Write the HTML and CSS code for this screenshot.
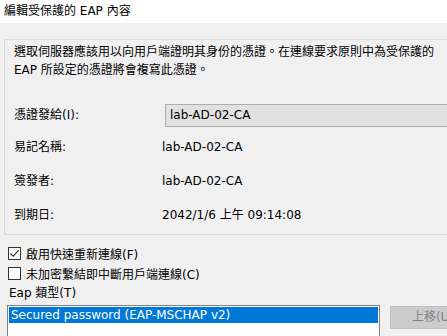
FILE: index.html
```html
<!DOCTYPE html>
<html lang="zh-Hant">
<head>
<meta charset="utf-8">
<title>編輯受保護的 EAP 內容</title>
<link rel="stylesheet" href="styles.css">
</head>
<body>
<div class="window">
  <div class="titlebar">編輯受保護的 EAP 內容</div>
  <div class="content">
    <div class="group">
      <p class="desc">選取伺服器應該用以向用戶端證明其身份的憑證。在連線要求原則中為受保護的<br>EAP 所設定的憑證將會複寫此憑證。</p>
      <div class="grid">
        <div class="label">憑證發給(I):</div>
        <div class="combo">lab-AD-02-CA</div>
        <div class="label">易記名稱:</div>
        <div class="value">lab-AD-02-CA</div>
        <div class="label">簽發者:</div>
        <div class="value">lab-AD-02-CA</div>
        <div class="label">到期日:</div>
        <div class="value">2042/1/6 上午 09:14:08</div>
      </div>
    </div>
    <div class="options">
      <div class="check-row">
        <span class="box">
          <svg width="11" height="11" viewBox="0 0 11 11"><polyline points="1.5,5.5 4.2,8.2 9.8,2.2" fill="none" stroke="#333" stroke-width="1.2"/></svg>
        </span>
        <span>啟用快速重新連線(F)</span>
      </div>
      <div class="check-row">
        <span class="box"></span>
        <span>未加密繫結即中斷用戶端連線(C)</span>
      </div>
      <div class="eap-label">Eap 類型(T)</div>
    </div>
    <div class="list-area">
      <div class="listbox">
        <div class="item selected">Secured password (EAP-MSCHAP v2)</div>
      </div>
      <div class="buttons">
        <div class="btn">上移(U)</div>
        <div class="btn"></div>
      </div>
    </div>
  </div>
</div>
</body>
</html>
```

FILE: styles.css
```css
html, body {
  margin: 0;
  padding: 0;
}
body {
  background: #f0f0f0;
  font-family: "DejaVu Sans", "Noto Sans CJK TC", sans-serif;
  font-size: 12px;
  color: #000;
  width: 447px;
  height: 336px;
  overflow: hidden;
}
.window {
  width: 447px;
  height: 336px;
  overflow: hidden;
}
.titlebar {
  height: 23px;
  background: #fff;
  padding-left: 4px;
  line-height: 23px;
  box-sizing: border-box;
}
.content {
  padding: 16px 0 0 4px;
}
.group {
  width: 470px;
  border: 1px solid #dcdcdc;
  padding: 3px 0 3px 9px;
}
.desc {
  margin: 0;
  line-height: 18px;
}
.grid {
  margin-top: 21px;
  display: grid;
  grid-template-columns: 148px 1fr;
  grid-template-rows: 30px 34px 34px 33px;
  align-items: center;
}
.label, .value {
  line-height: 18px;
}
.combo {
  margin-left: 3px;
  height: 23px;
  box-sizing: border-box;
  border: 1px solid #adadad;
  background: #e1e1e1;
  padding-left: 4px;
  line-height: 21px;
}
.options {
  margin-top: 8px;
  padding-left: 4px;
}
.check-row {
  height: 20px;
  display: flex;
  align-items: center;
  gap: 5px;
}
.box {
  width: 13px;
  height: 13px;
  box-sizing: border-box;
  border: 1px solid #333;
  background: #fff;
  display: flex;
  align-items: center;
  justify-content: center;
}
.eap-label {
  height: 20px;
  line-height: 20px;
  padding-left: 1px;
}
.list-area {
  margin-top: 2px;
  margin-left: 3px;
  display: flex;
  gap: 10px;
  width: 480px;
}
.listbox {
  flex: 0 0 373px;
  height: 60px;
  box-sizing: border-box;
  border: 1px solid #828282;
  background: #fff;
  padding: 1px;
}
.item {
  height: 16px;
  line-height: 16px;
  padding-left: 2px;
}
.item.selected {
  background: #0078d7;
  color: #fff;
}
.buttons {
  flex: 0 0 86px;
  margin-top: 1px;
  display: flex;
  flex-direction: column;
  gap: 7px;
}
.btn {
  height: 23px;
  box-sizing: border-box;
  border: 1px solid #bfbfbf;
  background: #cccccc;
  color: #838383;
  text-align: center;
  line-height: 21px;
}
```
